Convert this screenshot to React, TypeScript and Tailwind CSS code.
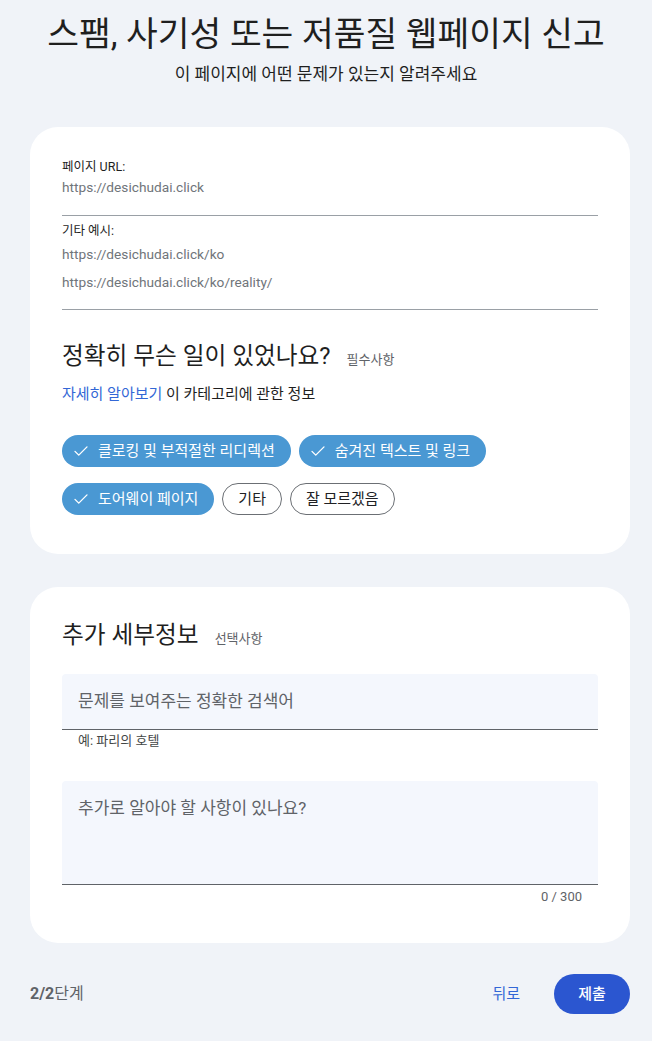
import React from "react";

const font = { fontFamily: 'Roboto, "Noto Sans CJK KR", "Noto Sans", sans-serif' };

function Check() {
  return (
    <svg width="18" height="18" viewBox="0 0 24 24" fill="none" stroke="white" strokeWidth="1.8" strokeLinecap="round" strokeLinejoin="round">
      <path d="M4 12.5l5 5L20 6.5" />
    </svg>
  );
}

function Chip({ label, selected }: { label: string; selected?: boolean }) {
  if (selected) {
    return (
      <div className="flex h-8 items-center gap-2 rounded-full bg-[#4a98d3] pl-[10px] pr-[16px] text-[15px] text-white">
        <Check />
        <span>{label}</span>
      </div>
    );
  }
  return (
    <div className="flex h-8 items-center rounded-full border border-[#6b6f74] px-[15px] text-[15px] text-[#202124]">
      {label}
    </div>
  );
}

export default function App() {
  return (
    <div style={font} className="min-h-[1041px] w-full bg-[#f0f3f8] text-[#1f1f1f]">
      <div className="pt-[12px] text-center">
        <h1 className="text-[34.5px] leading-[44px] text-[#1f1f1f]">스팸, 사기성 또는 저품질 웹페이지 신고</h1>
        <p className="mt-[7px] text-[17px] leading-[22px] text-[#1f1f1f]">이 페이지에 어떤 문제가 있는지 알려주세요</p>
      </div>

      <div className="pl-[30px] pr-[22px]">
        <div className="mt-[42px] rounded-[28px] bg-white px-[32px] pb-[39px] pt-[32px]">
          <div className="text-[12.5px] leading-[16px] text-[#1f1f1f]">페이지 URL:</div>
          <div className="mt-[2px] text-[13.7px] leading-[20px] text-[#70757a]">https://desichudai.click</div>
          <div className="mt-[18px] h-px bg-[#9aa0a6]" />
          <div className="mt-[7px] text-[12.5px] leading-[16px] text-[#1f1f1f]">기타 예시:</div>
          <div className="mt-[5px] text-[13.7px] leading-[20px] text-[#70757a]">https://desichudai.click/ko</div>
          <div className="mt-[8px] text-[13.7px] leading-[20px] text-[#70757a]">https://desichudai.click/ko/reality/</div>
          <div className="mt-[17px] h-px bg-[#9aa0a6]" />

          <div className="mt-[30px] flex items-baseline">
            <span className="text-[23.7px] leading-[32px] text-[#1f1f1f]">정확히 무슨 일이 있었나요?</span>
            <span className="ml-[16px] text-[13px] text-[#5f6368]">필수사항</span>
          </div>
          <div className="mt-[12px] text-[15px] leading-[20px]">
            <span className="text-[#3367d6]">자세히 알아보기</span>
            <span className="text-[#1f1f1f]"> 이 카테고리에 관한 정보</span>
          </div>

          <div className="mt-[31px] flex flex-wrap gap-x-[8px] gap-y-[16px]">
            <Chip label="클로킹 및 부적절한 리디렉션" selected />
            <Chip label="숨겨진 텍스트 및 링크" selected />
            <Chip label="도어웨이 페이지" selected />
            <Chip label="기타" />
            <Chip label="잘 모르겠음" />
          </div>
        </div>

        <div className="mt-[33px] rounded-[28px] bg-white px-[32px] pb-[38px] pt-[32px]">
          <div className="flex items-baseline">
            <span className="text-[23.7px] leading-[32px] text-[#1f1f1f]">추가 세부정보</span>
            <span className="ml-[16px] text-[13px] text-[#5f6368]">선택사항</span>
          </div>

          <div className="mt-[23px] flex h-[56px] items-center rounded-t-[4px] border-b border-[#5f6368] bg-[#f4f7fd] px-[16px] text-[17px] text-[#5f6368]">
            문제를 보여주는 정확한 검색어
          </div>
          <div className="mt-[3px] px-[16px] text-[13px] leading-[16px] text-[#444746]">예: 파리의 호텔</div>

          <div className="mt-[32px] h-[104px] rounded-t-[4px] border-b border-[#5f6368] bg-[#f4f7fd] px-[16px] pt-[15px] text-[17px] leading-[24px] text-[#5f6368]">
            추가로 알아야 할 사항이 있나요?
          </div>
          <div className="mt-[4px] pr-[16px] text-right text-[13px] leading-[16px] text-[#5f6368]">0 / 300</div>
        </div>

        <div className="mt-[31px] flex items-center justify-between">
          <div className="text-[16px] text-[#5f6368]">
            <span className="font-bold">2/2</span>단계
          </div>
          <div className="flex items-center">
            <span className="text-[15px] text-[#3367d6]">뒤로</span>
            <div className="ml-[34px] flex h-[40px] w-[76px] items-center justify-center rounded-full bg-[#2b56d0] text-[15px] font-medium text-white">
              제출
            </div>
          </div>
        </div>
      </div>
    </div>
  );
}
